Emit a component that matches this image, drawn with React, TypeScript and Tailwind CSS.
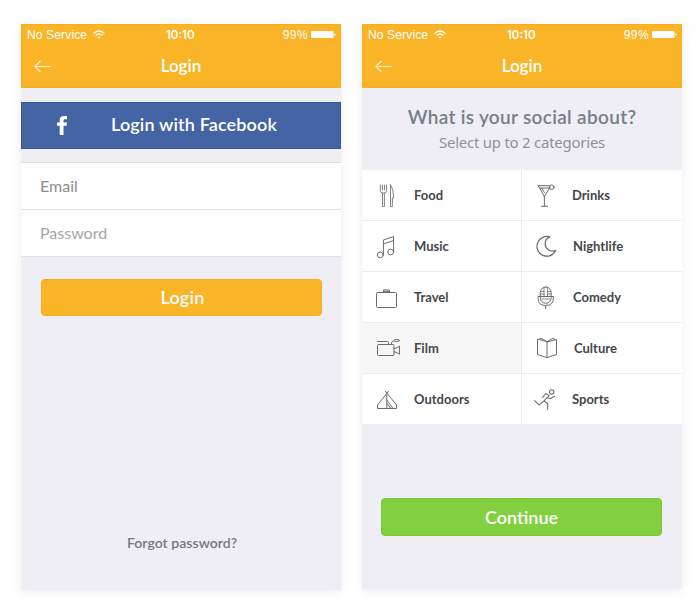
import type { ReactNode } from "react";

function Icon({ children }: { children: ReactNode }) {
  return (
    <svg
      className="size-8 shrink-0"
      viewBox="0 0 32 32"
      fill="none"
      stroke="#6c6c6c"
      strokeWidth="1"
      strokeLinecap="round"
      strokeLinejoin="round"
    >
      {children}
    </svg>
  );
}

const icons: Record<string, ReactNode> = {
  food: (
    <>
      <path d="M9.300 5v5.500q0 2 2 2.500h2.200q2-.5 2-2.500V5M11.400 5v5M13.500 5v5M11.500 13v13.500h1.900V13" strokeWidth=".85" />
      <path d="M19.500 5v21.500h1.900v-8.500h1.100q0-9-3-13z" strokeWidth=".85" />
    </>
  ),
  music: (
    <>
      <circle cx="9.3" cy="24" r="2.9" />
      <circle cx="19.7" cy="21" r="2.9" />
      <path d="M12.400 24V9l10.200-3.500V21M12.400 13l10.200-3.500" />
    </>
  ),
  travel: (
    <>
      <rect x="5.5" y="10.5" width="20" height="15" rx="1" />
      <path d="M12.500 10.500v-2.500h6v2.500M12.500 9.300h6" />
    </>
  ),
  film: (
    <>
      <rect x="6.5" y="11.5" width="16.5" height="11" rx="1" />
      <path d="M6.500 8.500h10q1 0 1 1v2M20.500 11.500V10q0-1.800 2.500-2.300" />
      <ellipse cx="25.7" cy="7.5" rx="2.7" ry="1.1" />
      <path d="M23 15.500l2-.3 3.500-2v8l-3.500-2-2-.3" />
    </>
  ),
  outdoors: (
    <>
      <path d="M14.500 7.300l2.500 3.200 8.500 10.500v3.500H6.500V21L15 10.500l2.500-3.200" />
      <path d="M15.800 10.500v14M15.800 16l6.200 8.500M16 19.500l3.800 5" />
    </>
  ),
  drinks: (
    <>
      <path d="M8.300 5.700l6.100 10.800 5.800-9.500M8.300 5.700h11M9.500 8h10.400M12 8.500l2.400 4" />
      <circle cx="21.7" cy="7.2" r="2.3" />
      <path d="M14.400 16.500v9.500M11.300 26.300h6.400" />
    </>
  ),
  nightlife: (
    <path
      d="M20 5.900A9.900 9.900 0 1 0 25.800 19.600C20 21.200 15.200 18 15.200 12.800C15.200 9.500 17 6.900 20 5.900z"
      strokeWidth="1.2"
    />
  ),
  comedy: (
    <>
      <rect x="10.3" y="5" width="10.8" height="16.3" rx="5.4" />
      <path d="M10.300 14.500H8v1.500q0 7.500 7.700 7.500t7.700-7.500v-1.500h-2.300M10.300 14.500h10.800M15.700 23.500v3.300" />
      <path
        d="M10.500 9.500h3.500M10.500 12h3.500M17.400 9.500h3.500M17.400 12h3.500M14 5.500v9M17.400 5.500v9M12 17h7.400"
        strokeWidth=".8"
      />
    </>
  ),
  culture: (
    <path d="M17 9v15.700l-9.500-3.200V6.500zM17 9l9.500-2.500v15L17 24.700M9 6.300l2-1 6 3.500 5.800-3.500 2 1" />
  ),
  sports: (
    <g strokeWidth="1.1">
      <circle cx="21.7" cy="7.9" r="2.2" />
      <path d="M12.700 13.300l3-3.800 3.400 2.100-5.100 5.300-4.900 4-4.500-4.200M17.800 14l3 .5 3.700-2.200M14 16.900l3.700 2.900v5.500" />
    </g>
  ),
};

function Header() {
  return (
    <header className="h-16 shrink-0 border border-[#f7ad1c] bg-[#f9b428] text-white">
      <div className="flex h-[19px] items-center pr-[4px] pl-[5px] font-['Liberation_Sans',sans-serif] text-[12px]">
        <div className="flex w-[139px] items-center">
          <span className="tracking-[0.15px]">No Service</span>
          <svg className="ml-[6px] h-[9px] w-3" viewBox="0 0 12 9" fill="none" stroke="white" strokeWidth="1.4">
            <path d="M.6 3.400q5.400-4.900 10.800 0M2.600 5.500q3.400-2.900 6.800 0" />
            <path d="M6 8.800L4.300 7.100q1.700-1.300 3.400 0z" fill="white" stroke="none" />
          </svg>
        </div>
        <span className="pt-0.5 font-['Inter'] text-[11.5px] font-semibold">10:10</span>
        <div className="ml-auto flex items-center">
          <span className="tracking-[0.4px]">99%</span>
          <svg className="ml-[3px] h-[7px] w-[25px]" viewBox="0 0 25 7" fill="white">
            <rect width="22.5" height="7" rx="1.2" />
            <path d="M23.300 2.200q1.200 0 1.200 1.300t-1.200 1.300z" />
          </svg>
        </div>
      </div>
      <div className="grid h-[44px] grid-cols-[1fr_auto_1fr] items-center">
        <svg className="ml-[12px] h-[13px] w-[17px]" viewBox="0 0 17 13" fill="none" stroke="#fff6dc" strokeWidth="1.1">
          <path d="M6.500 1L.8 6.500l5.700 5.500M.8 6.500h15.700" />
        </svg>
        <h1 className="text-[17px] font-semibold">Login</h1>
      </div>
    </header>
  );
}

function LoginScreen() {
  return (
    <section className="flex h-[566px] w-80 flex-col bg-[#efeef5] shadow-[0_2px_10px_rgba(0,0,0,0.08)]">
      <Header />
      <button className="mt-3.5 flex h-[47px] shrink-0 items-center border border-[#34569a] bg-[#4464a3] text-white">
        <svg className="ml-[35px] h-[19px] w-[11px]" viewBox="0 0 11 19" fill="white">
          <path d="M2.700 19V9.700H0V6.400h2.700V4.200Q2.700 0 7 0h3v3.300H8Q6.500 3.300 6.500 4.700v1.700H10l-.5 3.300h-3V19z" />
        </svg>
        <span className="ml-[43px] pb-0.5 text-[18px] font-semibold tracking-[0.15px]">Login with Facebook</span>
      </button>
      <form className="mt-[13px] border-y border-[#dfdee3] bg-white text-[16px]">
        <div className="flex h-[47px] items-center border-b border-[#e4e4e8] pl-[19px] text-[#8c8c8c]">Email</div>
        <div className="flex h-[46px] items-center pb-px pl-[19px] text-[#a5a5a5]">Password</div>
      </form>
      <button className="mr-[19.5px] ml-[19.5px] mt-[21.5px] h-[37.5px] shrink-0 rounded-[4px] border border-[#f7ad1c] bg-[#f9b428] pl-[3px] text-[18px] font-semibold tracking-[0.2px] text-white">
        Login
      </button>
      <a className="mt-auto mb-[37px] pl-0.5 text-center text-[14px] font-semibold leading-5 tracking-[0.05px] text-[#777]">
        Forgot password?
      </a>
    </section>
  );
}

const categories = [
  { id: "food", label: "Food", gap: "ml-[11px]" },
  { id: "drinks", label: "Drinks", gap: "ml-[10px]" },
  { id: "music", label: "Music", gap: "ml-[11px]" },
  { id: "nightlife", label: "Nightlife", gap: "ml-[11px]" },
  { id: "travel", label: "Travel", gap: "ml-[11px]" },
  { id: "comedy", label: "Comedy", gap: "ml-[11px]" },
  { id: "film", label: "Film", gap: "ml-[11px]" },
  { id: "culture", label: "Culture", gap: "ml-[12px]" },
  { id: "outdoors", label: "Outdoors", gap: "ml-[11px]" },
  { id: "sports", label: "Sports", gap: "ml-[10px]" },
];

function CategoryScreen() {
  return (
    <section className="flex h-[565px] w-80 flex-col bg-[#efeef5] shadow-[0_2px_10px_rgba(0,0,0,0.08)]">
      <Header />
      <div className="h-[82px] shrink-0 pt-[17px] text-center">
        <h2 className="text-[19px] font-semibold leading-6 tracking-[0.32px] text-[#758084]">
          What is your social about?
        </h2>
        <p className="mt-[1px] font-['Noto_Sans'] text-[15px] leading-6 tracking-[-0.25px] text-[#929292]">
          Select up to 2 categories
        </p>
      </div>
      <div className="grid shrink-0 grid-cols-[159px_160px] gap-px bg-[#ebebf2]">
        {categories.map((c, i) => (
          <div
            key={c.id}
            className={`flex h-[50px] items-center pt-0.5 ${i % 2 ? "pl-[8px]" : "pl-[9px]"} ${c.id === "film" ? "bg-[#f6f6f7]" : "bg-white"}`}
          >
            <Icon>{icons[c.id]}</Icon>
            <span className={`${c.gap} text-[13px] font-bold text-[#45474a]`}>{c.label}</span>
          </div>
        ))}
      </div>
      <button className="mr-[20px] ml-[19px] mt-[74px] h-[38px] shrink-0 rounded-[4px] border border-[#78cb34] bg-[#82d040] text-[18px] font-semibold text-white">
        Continue
      </button>
    </section>
  );
}

export default function App() {
  return (
    <main className="flex h-[606px] w-[698px] items-start gap-[21px] overflow-hidden bg-white pt-6 pl-[21px] font-['Lato',sans-serif]">
      <LoginScreen />
      <CategoryScreen />
    </main>
  );
}
